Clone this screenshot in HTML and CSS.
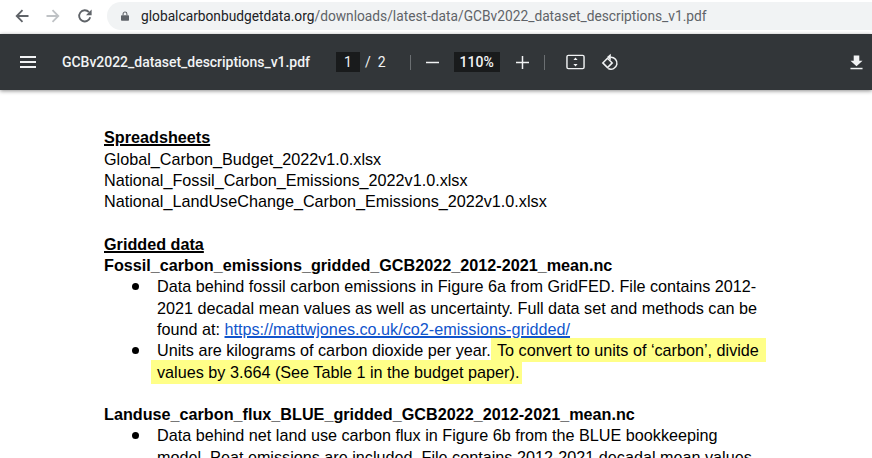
FILE: index.html
```html
<!DOCTYPE html>
<html lang="en">
<head>
<meta charset="utf-8">
<title>GCBv2022_dataset_descriptions_v1.pdf</title>
<link rel="stylesheet" href="styles.css">
</head>
<body>
<header class="browser">
  <svg class="nav nav-back" viewBox="0 0 16 16"><path d="M14.5 8H3M8.5 2.2 2.7 8l5.8 5.8" /></svg>
  <svg class="nav nav-fwd" viewBox="0 0 16 16"><path d="M1.5 8H13M7.5 2.2 13.3 8l-5.8 5.8" /></svg>
  <svg class="nav nav-reload" viewBox="0 0 16 16"><path d="M13.2 9.2A5.6 5.6 0 1 1 12 4.2" /><path class="fill" d="M14.6 1.6v5.6H9z" /></svg>
  <div class="omnibox">
    <svg class="lock" viewBox="0 0 10 12"><path d="M1 5h8a1 1 0 0 1 1 1v5a1 1 0 0 1-1 1H1a1 1 0 0 1-1-1V6a1 1 0 0 1 1-1z" /><path class="shackle" d="M2.6 5V3.4a2.4 2.4 0 0 1 4.8 0V5" /></svg>
    <span class="url"><span class="host">globalcarbonbudgetdata.org</span>/downloads/latest-data/GCBv2022_dataset_descriptions_v1.pdf</span>
  </div>
</header>
<div class="toolbar">
  <svg class="menu" viewBox="0 0 16 12"><path d="M0 1h16M0 6h16M0 11h16" /></svg>
  <span class="title">GCBv2022_dataset_descriptions_v1.pdf</span>
  <span class="page-box">1</span>
  <span class="slash">/</span>
  <span class="total">2</span>
  <span class="divider div-a"></span>
  <svg class="tool tool-minus" viewBox="0 0 14 14"><path d="M0 7h14" /></svg>
  <span class="zoom-box">110%</span>
  <svg class="tool tool-plus" viewBox="0 0 14 14"><path d="M0 7h14M7 0v14" /></svg>
  <span class="divider div-b"></span>
  <svg class="tool-fit" viewBox="0 0 20 16"><rect x="1" y="1" width="18" height="14" rx="1.5" /><path class="fill" d="M10 3.2 12.2 6H7.800zM10 12.800 7.800 10h4.400z" /></svg>
  <svg class="tool-rotate" viewBox="0 0 18 18"><path d="M9.500 4.200a6 6 0 1 1-2.300 11.300" /><path d="M6.500 5.200 1.800 9.900l4.700 4.700 4.700-4.700z" /><path class="fill" d="M9.800 0.800v6.500L6 4z" /></svg>
  <svg class="tool-download" viewBox="0 0 14 15"><path class="fill" d="M4 0h6v5.500h3.500L7 11.500.5 5.500H4z" /><path d="M.5 14h13" /></svg>
</div>
<main class="doc">
  <h2 class="heading">Spreadsheets</h2>
  <p>Global_Carbon_Budget_2022v1.0.xlsx</p>
  <p>National_Fossil_Carbon_Emissions_2022v1.0.xlsx</p>
  <p>National_LandUseChange_Carbon_Emissions_2022v1.0.xlsx</p>
  <h2 class="heading gap">Gridded data</h2>
  <h3>Fossil_carbon_emissions_gridded_GCB2022_2012-2021_mean.nc</h3>
  <ul>
    <li>Data behind fossil carbon emissions in Figure 6a from GridFED. File contains 2012-<br>2021 decadal mean values as well as uncertainty. Full data set and methods can be<br>found at: <a href="#">https://mattwjones.co.uk/co2-emissions-gridded/</a></li>
    <li>Units are kilograms of carbon dioxide per year.<mark class="first"> To convert to units of ‘carbon’, divide</mark><br><mark class="second">values by 3.664 (See Table 1 in the budget paper).</mark></li>
  </ul>
  <h3 class="gap">Landuse_carbon_flux_BLUE_gridded_GCB2022_2012-2021_mean.nc</h3>
  <ul>
    <li>Data behind net land use carbon flux in Figure 6b from the BLUE bookkeeping<br>model. Peat emissions are included. File contains 2012-2021 decadal mean values</li>
  </ul>
</main>
</body>
</html>
```
FILE: styles.css
```css
* { box-sizing: border-box; }
html, body { margin: 0; height: 458px; overflow: hidden; background: #fff; }
body { font-family: "Liberation Sans", Arial, sans-serif; color: #000; }

.browser { display: flex; align-items: center; height: 34px; padding: 1px 0 4px 14px; background: #fff; }
.nav { width: 16px; height: 16px; flex: none; fill: none; stroke-width: 1.800; }
.nav-back { stroke: #5f6368; margin-right: 15px; }
.nav-fwd { stroke: #bfc2c5; margin-right: 16px; }
.nav-reload { stroke: #5f6368; margin-right: 14px; }
.nav .fill { fill: #5f6368; stroke: none; }
.omnibox { flex: 1; height: 28px; display: flex; align-items: center; padding-left: 14px; background: #f1f3f4; border-radius: 14px 0 0 14px; }
.lock { width: 8px; height: 10px; fill: #5f6368; margin-right: 12px; flex: none; overflow: visible; }
.lock .shackle { fill: none; stroke: #5f6368; stroke-width: 1.300; }
.url { font-family: Roboto, sans-serif; font-size: 13.75px; color: #5f6368; white-space: nowrap; }
.host { color: #202124; }

.toolbar { position: relative; z-index: 1; display: flex; align-items: center; height: 56px; background: #323639; color: #f1f3f4; font-family: Roboto, sans-serif; box-shadow: 0 1px 4px rgba(0,0,0,.45); padding-left: 20px; }
.toolbar svg { flex: none; fill: none; stroke: #f1f3f4; }
.toolbar svg .fill { fill: #f1f3f4; stroke: none; }
.menu { width: 16px; height: 12px; stroke-width: 2; margin-right: 26px; }
.title { font-size: 14px; font-weight: 500; width: 274px; white-space: nowrap; letter-spacing: -0.03px; }
.page-box { width: 24px; height: 20px; line-height: 20px; background: #191b1c; text-align: center; font-size: 14px; }
.slash { margin-left: 5px; font-size: 14px; }
.total { margin-left: 7px; font-size: 14px; }
.divider { width: 1px; height: 15px; background: #6b6f72; flex: none; }
.div-a { margin-left: 24px; }
.tool { width: 13px; height: 13px; stroke-width: 1.600; }
.tool-minus { margin-left: 15px; }
.zoom-box { width: 46px; height: 20px; line-height: 20px; margin-left: 15px; background: #191b1c; text-align: center; font-size: 14px; font-weight: 500; }
.tool-plus { margin-left: 16px; }
.div-b { margin-left: 15px; }
.tool-fit { width: 19px; height: 16px; stroke-width: 1.500; margin-left: 21px; }
.tool-rotate { width: 18px; height: 18px; stroke-width: 1.500; margin-left: 16px; }
.tool-download { width: 13px; height: 15px; stroke-width: 1.600; margin-left: auto; margin-right: 9px; }

.doc { padding: 37.300px 0 0 104px; font-size: 16.2px; line-height: 21.300px; }
.doc p, .doc h2, .doc h3, .doc ul { margin: 0; }
.doc h2, .doc h3 { font-size: inherit; font-weight: 700; }
.heading { text-decoration: underline; text-decoration-thickness: 1.500px; }
.gap { margin-top: 21.300px !important; }
.doc ul { list-style: none; padding: 0 0 0 53px; }
.doc li { position: relative; white-space: nowrap; }
.doc li::before { content: ""; position: absolute; left: -25px; top: 7px; width: 7px; height: 7px; border-radius: 50%; background: #000; }
.doc a { color: #1155cc; text-decoration: underline; text-decoration-thickness: 1.500px; }
mark { background: #ffff88; color: inherit; padding: 3px 0 3px; }
.first { padding-right: 7px; padding-left: 2px; }
.second { margin-left: -6px; padding-left: 6px; padding-right: 3px; }
```
